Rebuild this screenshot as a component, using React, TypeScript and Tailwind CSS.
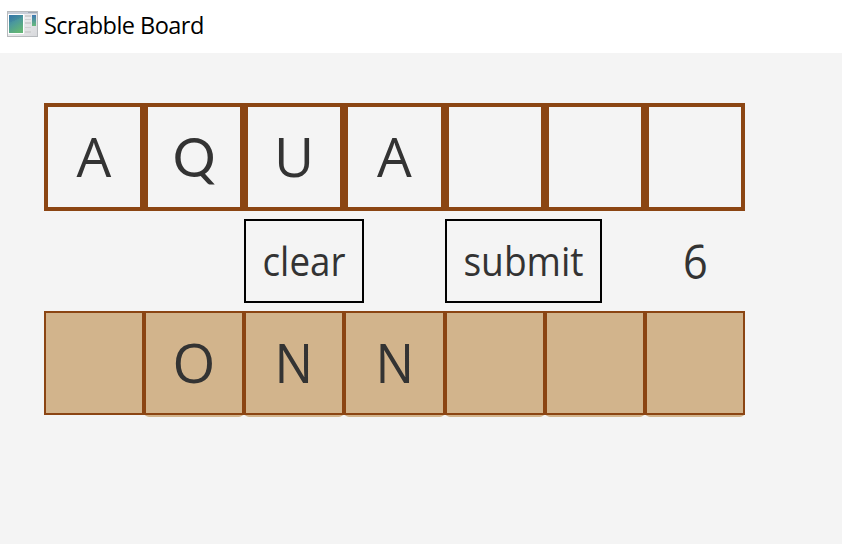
import React from "react";

const columns = "grid grid-cols-[100px_100px_100px_101px_100px_100px_100px]";
const board = ["A", "Q", "U", "A", "", "", ""];
const rack = ["", "O", "N", "N", "", "", ""];

const glyphStyles: Record<string, string> = {
  Q: "font-['Lato',sans-serif] -translate-y-px scale-x-[.97]",
  N: "-translate-y-px scale-x-[.93]",
};

function Letter({ value }: { value: string }) {
  return <span className={"block " + (glyphStyles[value] ?? "-translate-y-px")}>{value}</span>;
}

function WindowIcon() {
  return (
    <svg width="32" height="26" viewBox="0 0 32 26" className="shrink-0" shapeRendering="crispEdges">
      <defs>
        <linearGradient id="pane" x1="0" y1="0" x2="0.5" y2="1">
          <stop offset="0" stopColor="#3478ab" />
          <stop offset="0.5" stopColor="#4c9a9b" />
          <stop offset="1" stopColor="#62b477" />
        </linearGradient>
        <linearGradient id="side" x1="0" y1="0" x2="0" y2="1">
          <stop offset="0" stopColor="#3f78b4" />
          <stop offset="1" stopColor="#68bb7c" />
        </linearGradient>
        <linearGradient id="frame" x1="0" y1="0" x2="1" y2="1">
          <stop offset="0" stopColor="#f8f8f9" />
          <stop offset="1" stopColor="#d8d9dc" />
        </linearGradient>
      </defs>
      <rect x="0" y="0" width="31" height="26" fill="#b7babd" />
      <rect x="1" y="1" width="29" height="24" fill="url(#frame)" />
      <rect x="1" y="1" width="29" height="2" fill="#c8ced8" />
      <rect x="21" y="1" width="9" height="1" fill="#9fa9b6" />
      <rect x="1" y="3" width="16" height="20" fill="#fff" />
      <rect x="2" y="4" width="14" height="18" fill="url(#pane)" />
      <path d="M2 11 Q10 10 16 5 V4 H2Z" fill="#2d659d" opacity=".15" />
      <g fill="#cfd0d1">
        <rect x="18" y="4" width="6" height="2" />
        <rect x="18" y="8" width="6" height="1" />
        <rect x="18" y="11" width="6" height="2" />
        <rect x="18" y="16" width="6" height="1" />
        <rect x="18" y="20" width="6" height="2" />
      </g>
      <rect x="25" y="4" width="4" height="11" fill="url(#side)" />
    </svg>
  );
}

export default function App() {
  return (
    <div className="h-[544px] w-[842px] overflow-hidden bg-[#f4f4f4] font-['Open_Sans','Noto_Sans',sans-serif] text-[#333333]">
      <header className="flex h-[53px] items-start bg-white pl-[7px] pt-[11px] text-black">
        <WindowIcon />
        <h1 className="ml-[5px] h-[30px] origin-left whitespace-nowrap text-[23.5px] leading-[29px] tracking-[-0.53px]">
          Scrabble Board
        </h1>
      </header>
      <main className="w-[745px] pl-[44px] pt-[50px]">
        <div className={columns}>
          {board.map((letter, i) => (
            <div key={i} className="flex h-[108px] items-center justify-center border-4 border-[#8b4513] text-[55px] leading-[60px]">
              <Letter value={letter} />
            </div>
          ))}
        </div>
        <div className={columns + " h-[100px] pt-2"}>
          <button className="col-start-3 h-[84px] w-[120px] border-2 border-black text-[39.5px] leading-[60px]">
            <span className="block scale-x-[.93]">clear</span>
          </button>
          <button className="col-start-5 h-[84px] w-[157px] border-2 border-black text-[39.5px] leading-[60px]">
            <span className="block scale-x-[.94]">submit</span>
          </button>
          <div className="col-start-7 flex h-[84px] items-center justify-center text-[47px] leading-[60px]">
            <span className="block scale-x-[.92]">6</span>
          </div>
        </div>
        <div className={columns}>
          {rack.map((letter, i) => (
            <div key={i} className={i ? "h-[106px] rounded-b-[5px] bg-[#d2b48c]" : "h-[104px] bg-[#d2b48c]"}>
              <div className="flex h-[104px] items-center justify-center border-2 border-[#8b4513] text-[55px] leading-[60px]">
                <Letter value={letter} />
              </div>
            </div>
          ))}
        </div>
      </main>
    </div>
  );
}
